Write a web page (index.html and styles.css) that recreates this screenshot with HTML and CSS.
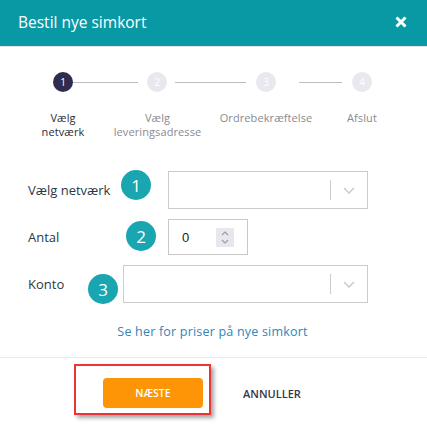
FILE: index.html
```html
<!DOCTYPE html>
<html lang="da">
<head>
<meta charset="utf-8">
<title>Bestil nye simkort</title>
<link rel="stylesheet" href="styles.css">
</head>
<body>
<div class="modal">
  <header class="modal-header">
    <h1 class="modal-title">Bestil nye simkort</h1>
    <button class="close-btn" aria-label="Luk">
      <svg width="12" height="12" viewBox="0 0 12 12"><path d="M1.5 1.5 L10.5 10.5 M10.5 1.5 L1.5 10.5" stroke="#fff" stroke-width="3" fill="none"/></svg>
    </button>
  </header>

  <section class="stepper">
    <div class="track">
      <span class="dot dot-active">1</span>
      <span class="conn conn-1"></span>
      <span class="dot">2</span>
      <span class="conn conn-2"></span>
      <span class="dot">3</span>
      <span class="conn conn-3"></span>
      <span class="dot">4</span>
    </div>
    <div class="step-labels">
      <span class="step-label step-label-active">Vælg<br>netværk</span>
      <span class="step-label">Vælg<br>leveringsadresse</span>
      <span class="step-label">Ordrebekræftelse</span>
      <span class="step-label">Afslut</span>
    </div>
  </section>

  <form class="form">
    <div class="row">
      <label class="label">Vælg netværk</label>
      <div class="select">
        <span class="select-value"></span>
        <span class="select-sep"></span>
        <span class="select-ind"><svg width="12" height="7" viewBox="0 0 12 7"><polyline points="1,1 6,6 11,1" fill="none" stroke="#cccccc" stroke-width="1.6"/></svg></span>
      </div>
      <span class="badge badge-1">1</span>
    </div>
    <div class="row row-2">
      <label class="label">Antal</label>
      <div class="number">
        <span class="number-value">0</span>
        <span class="spin">
          <svg width="8" height="5" viewBox="0 0 8 5"><polyline points="1,4 4,1 7,4" fill="none" stroke="#9a9aa3" stroke-width="1.1"/></svg>
          <svg width="8" height="5" viewBox="0 0 8 5"><polyline points="1,1 4,4 7,1" fill="none" stroke="#9a9aa3" stroke-width="1.1"/></svg>
        </span>
      </div>
      <span class="badge badge-2">2</span>
    </div>
    <div class="row row-3">
      <label class="label label-short">Konto</label>
      <div class="select select-wide">
        <span class="select-value"></span>
        <span class="select-sep"></span>
        <span class="select-ind"><svg width="12" height="7" viewBox="0 0 12 7"><polyline points="1,1 6,6 11,1" fill="none" stroke="#cccccc" stroke-width="1.6"/></svg></span>
      </div>
      <span class="badge badge-3">3</span>
    </div>
    <p class="price-link"><a href="#">Se her for priser på nye simkort</a></p>
  </form>

  <footer class="footer">
    <button class="btn-primary" type="button">NÆSTE</button>
    <button class="btn-link" type="button">ANNULLER</button>
    <span class="highlight"></span>
  </footer>
</div>
</body>
</html>
```

FILE: styles.css
```css
* { box-sizing: border-box; }
html, body { margin: 0; padding: 0; background: #fff; }
body {
  font-family: "Open Sans", "Noto Sans", sans-serif;
  width: 427px;
  height: 427px;
  overflow: hidden;
}
.modal { position: relative; }

.modal-header {
  height: 47px;
  background: #0999a5;
  border-bottom: 1px solid #e6e6ea;
  display: flex;
  align-items: center;
  justify-content: space-between;
  padding: 0 20px 0 18px;
}
.modal-title {
  margin: 0;
  font-size: 15.5px;
  font-weight: 400;
  color: #fff;
  line-height: 20px;
  padding-bottom: 2px;
}
.close-btn {
  border: 0;
  background: none;
  padding: 0;
  width: 12px;
  height: 12px;
  display: flex;
  margin-bottom: 3px;
}

.stepper { padding-top: 25px; }
.track {
  display: flex;
  align-items: center;
  padding-left: 53px;
  height: 20px;
}
.dot {
  width: 20px;
  height: 20px;
  border-radius: 50%;
  background: #e9e8ef;
  color: #fff;
  font-size: 10px;
  display: flex;
  align-items: center;
  justify-content: center;
  flex: none;
}
.dot-active { background: #2f2c4d; }
.conn {
  height: 1px;
  background: #bdbdc2;
  flex: none;
  margin-top: 1px;
}
.conn-1 { width: 65px; margin-right: 9px; }
.conn-2 { width: 71px; margin-left: 8px; margin-right: 10px; }
.conn-3 { width: 43px; margin-left: 23px; margin-right: 10px; }

.step-labels {
  display: grid;
  grid-template-columns: 94px 95px 122px 70px;
  margin: 19px 0 0 16px;
}
.step-label {
  text-align: center;
  font-size: 11px;
  line-height: 14px;
  color: #8a8a90;
  letter-spacing: 0.1px;
}
.step-label-active { color: #2e2e34; }

.form { margin-top: 32px; }
.row {
  position: relative;
  display: flex;
  align-items: center;
  padding-left: 28px;
  margin-bottom: 10px;
}
.label {
  width: 140px;
  font-size: 13px;
  color: #2b3848;
  flex: none;
}
.label-short { width: 95px; }

.select {
  width: 200px;
  height: 38px;
  border: 1px solid #cccccc;
  display: flex;
  align-items: center;
}
.select-wide { width: 245px; }
.select-value { flex: 1; }
.select-sep {
  width: 1px;
  height: 20px;
  background: #cccccc;
}
.select-ind {
  width: 36px;
  display: flex;
  justify-content: center;
  align-items: center;
}

.number {
  width: 80px;
  height: 36px;
  border: 1px solid #c8c8c8;
  display: flex;
  align-items: center;
  padding: 0 13px 0 13px;
}
.number-value {
  flex: 1;
  font-family: "Liberation Sans", Arial, sans-serif;
  font-size: 13px;
  color: #222;
}
.spin {
  width: 18px;
  height: 19px;
  background: #e8e7ed;
  display: flex;
  flex-direction: column;
  align-items: center;
  justify-content: center;
  gap: 3px;
}
.spin svg { display: block; }

.badge {
  position: absolute;
  width: 30px;
  height: 30px;
  border-radius: 50%;
  background: #1aa6b1;
  color: #fff;
  font-size: 17px;
  display: flex;
  align-items: center;
  justify-content: center;
}
.badge-1 { left: 121px; top: -1px; }
.badge-2 { left: 126px; top: 2px; }
.badge-3 { left: 88px; top: 9px; }

.price-link {
  margin: 21px 0 0;
  text-align: center;
  font-size: 12.5px;
  letter-spacing: 0.2px;
  line-height: 16px;
}
.price-link a {
  color: #2f86b8;
  text-decoration: none;
  position: relative;
  left: -1px;
}

.footer {
  position: relative;
  margin-top: 17px;
  border-top: 1px solid #e9e9ee;
  padding: 20px 0 0 103px;
  display: flex;
  align-items: center;
}
.btn-primary {
  width: 100px;
  height: 30px;
  border: 0;
  border-radius: 4px;
  background: #fd9506;
  color: #fff;
  font-family: "Open Sans", sans-serif;
  font-size: 10.5px;
  font-weight: 600;
  padding: 0;
}
.btn-link {
  margin-left: 40px;
  border: 0;
  background: none;
  padding: 0;
  font-family: "Open Sans", sans-serif;
  font-size: 11px;
  font-weight: 600;
  color: #35344a;
}
.highlight {
  position: absolute;
  left: 74px;
  top: 6px;
  width: 137px;
  height: 51px;
  border: 2px solid #ee3338;
  box-shadow: 3px 3px 4px rgba(0, 0, 0, 0.35);
}
```
